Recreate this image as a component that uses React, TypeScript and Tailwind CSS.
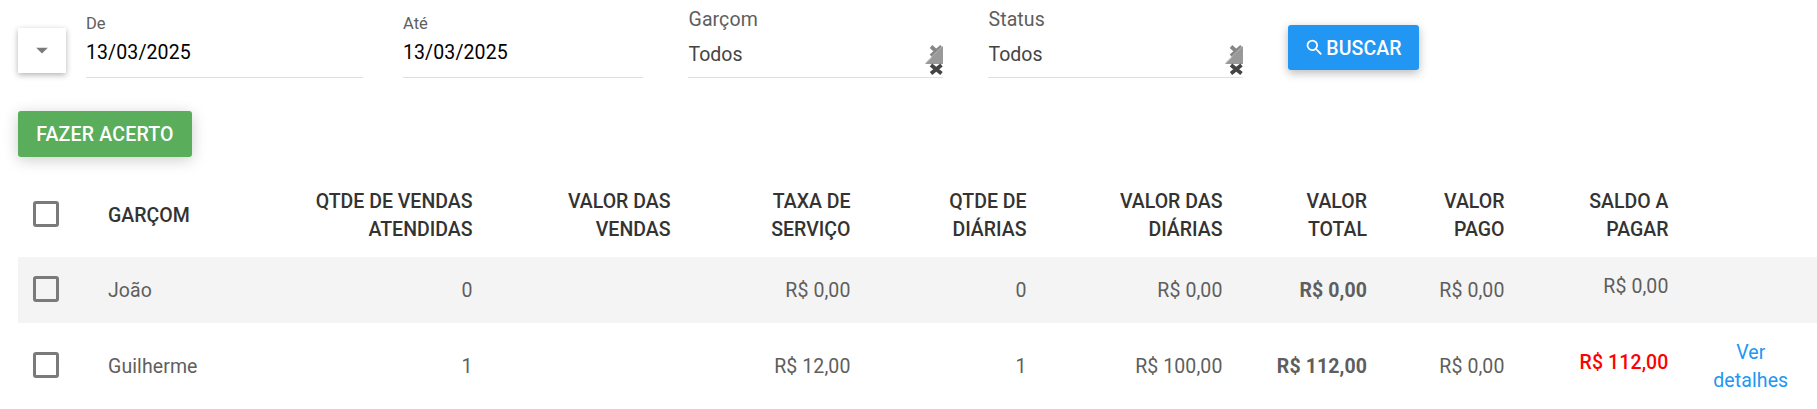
import React from 'react';
import { MdArrowDropDown, MdSearch } from 'react-icons/md';
import { clsx } from 'clsx';

interface Row {
    name: string;
    salesCount: string;
    salesTotal: string;
    serviceFee: string;
    dailyCount: string;
    dailyTotal: string;
    total: string;
    paid: string;
    balance: string;
    pending: boolean;
}

const rows: Row[] = [
    {
        name: 'João',
        salesCount: '0',
        salesTotal: '',
        serviceFee: 'R$ 0,00',
        dailyCount: '0',
        dailyTotal: 'R$ 0,00',
        total: 'R$ 0,00',
        paid: 'R$ 0,00',
        balance: 'R$ 0,00',
        pending: false,
    },
    {
        name: 'Guilherme',
        salesCount: '1',
        salesTotal: '',
        serviceFee: 'R$ 12,00',
        dailyCount: '1',
        dailyTotal: 'R$ 100,00',
        total: 'R$ 112,00',
        paid: 'R$ 0,00',
        balance: 'R$ 112,00',
        pending: true,
    },
];

const headers = [
    ['QTDE DE VENDAS', 'ATENDIDAS'],
    ['VALOR DAS', 'VENDAS'],
    ['TAXA DE', 'SERVIÇO'],
    ['QTDE DE', 'DIÁRIAS'],
    ['VALOR DAS', 'DIÁRIAS'],
    ['VALOR', 'TOTAL'],
    ['VALOR', 'PAGO'],
    ['SALDO A', 'PAGAR'],
];

const gridCols =
    'grid grid-cols-[90px_180px_184.5px_198px_180px_176px_196px_144.5px_137.5px_164px_1fr] items-center';

const DateField = ({ label, value, className }: { label: string; value: string; className: string }) => (
    <div className={clsx('flex h-[78px] flex-col border-b border-[#e0e0e0] pt-3', className)}>
        <label className="text-[16.5px] leading-6 text-[#5e5e5e]">{label}</label>
        <span className="pt-[3px] leading-7 tracking-[0.1px] text-black">{value}</span>
    </div>
);

// Clear mark, dropdown corner and second clear mark stacked on each other
const SelectMarks = () => (
    <svg width="18" height="30" viewBox="0 0 18 30" className="mb-[2px] shrink-0" fill="none">
        <path d="M6 1.5L16.5 11M16.5 1.5L6 11" stroke="#868686" strokeWidth="3.8" />
        <path d="M0 19L18 1V19Z" fill="#999999" />
        <path d="M1 17.6L17.5 1.1" stroke="#bdbdbd" strokeWidth="1" />
        <path d="M6 20L16.5 28.5M16.5 20L6 28.5" stroke="#444444" strokeWidth="3.8" />
    </svg>
);

const SelectField = ({ label, value }: { label: string; value: string }) => (
    <div className="ml-[45px] flex h-[78px] w-[255px] flex-col border-b border-[#e0e0e0] pt-[6px]">
        <label className="pl-[0.5px] leading-7 tracking-[0.1px] text-[#5e5e5e]">{label}</label>
        <div className="flex flex-1 items-end justify-between">
            <span className="pb-2 pl-[0.5px] leading-7 text-[#444444]">{value}</span>
            <SelectMarks />
        </div>
    </div>
);

const Checkbox = ({ className }: { className: string }) => (
    <div className={clsx('ml-[15px] size-[26px] rounded-[3px] border-3 border-[#7a7a7a]', className)} />
);

export default function App() {
    return (
        <div className="h-[409px] w-full overflow-hidden bg-white pl-[18px] font-['Roboto',sans-serif] text-[19.5px] leading-[27.86px] text-[#5e5e5e]">
            {/* Filters */}
            <div className="flex h-[111px] items-start">
                <button className="mt-7 flex h-[45px] w-12 items-center justify-center bg-white pb-px shadow-[0_2px_6px_rgba(0,0,0,0.3)]">
                    <MdArrowDropDown className="size-7 text-[#7a7a7a]" />
                </button>
                <DateField label="De" value="13/03/2025" className="ml-5 w-[277px]" />
                <DateField label="Até" value="13/03/2025" className="ml-10 w-[240px]" />
                <SelectField label="Garçom" value="Todos" />
                <SelectField label="Status" value="Todos" />
                <button className="mt-[25px] ml-[45px] flex h-[45px] w-[131px] items-center justify-center rounded-[3px] bg-[#2196f3] text-white shadow-[0_3px_10px_rgba(0,0,0,0.28)]">
                    <MdSearch className="mr-px size-[21px]" />
                    <span className="pt-[2px] pr-px font-medium tracking-[0.1px]">BUSCAR</span>
                </button>
            </div>

            <button className="flex h-[46px] w-[174px] items-center justify-center rounded-[3px] bg-[#5aad5b] pt-[2px] font-medium tracking-[0.2px] text-white shadow-[0_3px_15px_rgba(0,0,0,0.2)]">
                FAZER ACERTO
            </button>

            {/* Table */}
            <div className={clsx(gridCols, 'mt-[17px] h-[83px] text-right font-medium text-[#333333]')}>
                <Checkbox className="mb-[3px]" />
                <span className="text-left">GARÇOM</span>
                {headers.map(([first, second], i) => (
                    <span key={i}>
                        {first}
                        <br />
                        {second}
                    </span>
                ))}
            </div>
            {rows.map((row, i) => (
                <div
                    key={row.name}
                    className={clsx(gridCols, 'pt-[2px] text-right tracking-[0.1px]', i % 2 === 0 ? 'h-[66px] bg-[#f4f4f4]' : 'h-[86px]')}
                >
                    <Checkbox className="mb-1" />
                    <span className="text-left">{row.name}</span>
                    <span>{row.salesCount}</span>
                    <span>{row.salesTotal}</span>
                    <span>{row.serviceFee}</span>
                    <span>{row.dailyCount}</span>
                    <span>{row.dailyTotal}</span>
                    <span className="font-bold">{row.total}</span>
                    <span>{row.paid}</span>
                    <span className={clsx('pb-2', row.pending && 'font-medium text-[#ff0000]')}>{row.balance}</span>
                    {row.pending && (
                        <a className="pr-[6px] pl-[22px] text-center text-[#2196f3]">
                            Ver
                            <br />
                            detalhes
                        </a>
                    )}
                </div>
            ))}
        </div>
    );
}
